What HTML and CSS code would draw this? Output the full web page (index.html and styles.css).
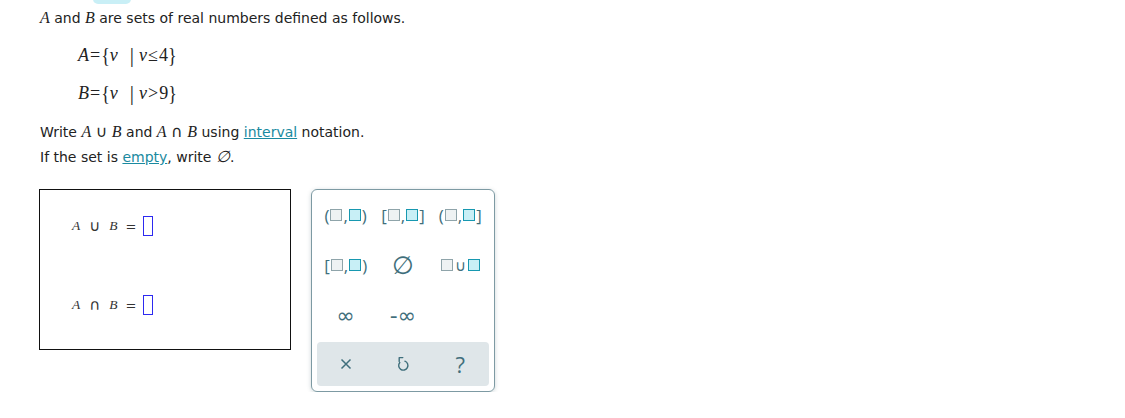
FILE: index.html
```html
<!DOCTYPE html>
<html lang="en">
<head>
    <meta charset="UTF-8">
    <title>Union and Intersection</title>
    <link rel="stylesheet" href="styles.css">
</head>
<body>
    <div class="tab-peek"></div>
    <div class="question">
        <p class="prompt"><i class="mv">A</i> and <i class="mv">B</i> are sets of real numbers defined as follows.</p>

        <div class="set-def first">
            <i class="mv">A</i><span class="op">=</span><span class="br">{</span><i class="mv">v</i><span class="bar">|</span><i class="mv">v</i><span class="op">≤</span>4<span class="br">}</span>
        </div>
        <div class="set-def">
            <i class="mv">B</i><span class="op">=</span><span class="br">{</span><i class="mv">v</i><span class="bar">|</span><i class="mv">v</i><span class="op">&gt;</span>9<span class="br">}</span>
        </div>

        <p class="prompt gap-top">Write <i class="mv">A</i> <span class="set-op">∪</span> <i class="mv">B</i> and <i class="mv">A</i> <span class="set-op">∩</span> <i class="mv">B</i> using <a href="#">interval</a> notation.</p>
        <p class="prompt">If the set is <a href="#">empty</a>, write <i class="mv">∅</i>.</p>

        <div class="work">
            <div class="answers">
                <div class="answer-row">
                    <i class="mv">A</i><span class="sym">∪</span><i class="mv">B</i><span class="eq">=</span><span class="slot"></span>
                </div>
                <div class="answer-row">
                    <i class="mv">A</i><span class="sym">∩</span><i class="mv">B</i><span class="eq">=</span><span class="slot"></span>
                </div>
            </div>

            <div class="palette">
                <div class="keys">
                    <button class="key">(<span class="sq"></span>,<span class="sq hi"></span>)</button>
                    <button class="key">[<span class="sq"></span>,<span class="sq hi"></span>]</button>
                    <button class="key">(<span class="sq"></span>,<span class="sq hi"></span>]</button>
                    <button class="key">[<span class="sq"></span>,<span class="sq hi"></span>)</button>
                    <button class="key empty-set">∅</button>
                    <button class="key"><span class="sq"></span><span class="cup">∪</span><span class="sq hi"></span></button>
                    <button class="key inf">∞</button>
                    <button class="key inf">-∞</button>
                    <div></div>
                </div>
                <div class="actions">
                    <button class="act">
                        <svg width="14" height="14" viewBox="0 0 14 14"><path d="M2.5 2.5 L11.5 11.5 M11.5 2.5 L2.5 11.5" stroke="#3f6f7c" stroke-width="1.5" fill="none"/></svg>
                    </button>
                    <button class="act">
                        <svg width="14" height="18" viewBox="0 0 14 18"><path d="M6.8 2.6 H3.2 V6.6 M3.8 7.5 A4.6 4.6 0 1 0 8.9 6.2" stroke="#3f6f7c" stroke-width="1.4" fill="none" stroke-linecap="round" stroke-linejoin="round"/></svg>
                    </button>
                    <button class="act help">?</button>
                </div>
            </div>
        </div>
    </div>
</body>
</html>
```

FILE: styles.css
```css
body {
    margin: 0;
    font-family: "DejaVu Sans", Verdana, sans-serif;
    font-size: 14px;
    color: #222;
    background: white;
}

.tab-peek {
    position: absolute;
    top: -6px;
    left: 93px;
    width: 38px;
    height: 10px;
    background: #c9eff6;
    border-radius: 5px;
}

.question {
    padding: 6px 0 0 40px;
}

.prompt {
    margin: 0;
    height: 25px;
    line-height: 25px;
}

.prompt a {
    color: #1a8aa0;
}

.mv {
    font-family: "Liberation Serif", "Times New Roman", serif;
    font-style: italic;
    font-size: 16px;
    line-height: 1;
}

.set-op {
    font-family: "DejaVu Sans", sans-serif;
    font-size: 16px;
    line-height: 1;
}

.set-def {
    font-family: "Liberation Serif", "Times New Roman", serif;
    font-size: 18px;
    display: flex;
    align-items: center;
    height: 38px;
    padding-left: 38px;
}

.set-def .mv {
    font-size: 18px;
}

.set-def.first {
    margin-top: 5px;
}

.set-def .op {
    margin: 0 1px;
}

.set-def .br {
    font-size: 18px;
    transform: scaleY(1.12);
}

.set-def .bar {
    font-size: 21px;
    margin: 0 5px 0 12px;
}

.gap-top {
    margin-top: 8px;
}

.work {
    display: flex;
    align-items: flex-start;
    gap: 20px;
    margin-top: 19px;
}

.answers {
    width: 252px;
    height: 161px;
    border: 1.5px solid #111;
    display: flex;
    flex-direction: column;
    gap: 59px;
    padding: 26px 0 0 32px;
    box-sizing: border-box;
    margin-left: -1px;
}

.answer-row {
    display: flex;
    align-items: center;
    font-family: "Liberation Serif", serif;
    font-size: 13px;
    color: #333;
}

.answer-row .mv {
    font-size: 13.5px;
}

.answer-row .sym {
    font-family: "DejaVu Sans", sans-serif;
    font-size: 15px;
    margin: 0 9px;
}

.answer-row .eq {
    font-family: "DejaVu Sans", sans-serif;
    font-size: 13px;
    margin: 0 7px 0 8px;
}

.slot {
    width: 8px;
    height: 18px;
    border: 1.5px solid #2d2af0;
    display: inline-block;
}

.palette {
    width: 184px;
    height: 203px;
    border: 1px solid #7d9aa3;
    border-radius: 6px;
    box-shadow: 0 1px 4px rgba(60, 90, 100, 0.25);
    padding: 0 5px 5px;
    box-sizing: border-box;
    display: flex;
    flex-direction: column;
}

.keys {
    display: grid;
    grid-template-columns: repeat(3, 1fr);
    grid-auto-rows: 50px;
    margin-bottom: 2px;
}

.key {
    border: none;
    background: none;
    display: flex;
    align-items: center;
    justify-content: center;
    font-family: "Open Sans", sans-serif;
    font-size: 17px;
    color: #3f6f7c;
    padding: 0;
    gap: 1px;
}

.sq {
    display: inline-block;
    width: 10px;
    height: 10px;
    border: 1.5px solid #8fa4aa;
    background: #eef2f3;
}

.sq.hi {
    border-color: #1798b0;
    background: #c8eff6;
}

.cup {
    font-size: 15px;
    margin: 0 1px;
}

.empty-set {
    font-size: 25px;
    font-family: "DejaVu Sans", sans-serif;
}

.inf {
    font-size: 22px;
    font-family: "DejaVu Sans", sans-serif;
}

.actions {
    flex: 1;
    background: #dfe6e9;
    border-radius: 4px;
    display: grid;
    grid-template-columns: repeat(3, 1fr);
}

.act {
    border: none;
    background: none;
    display: flex;
    align-items: center;
    justify-content: center;
    color: #3f6f7c;
    padding: 0;
}

.help {
    font-family: "Open Sans", sans-serif;
    font-size: 22px;
}
```
